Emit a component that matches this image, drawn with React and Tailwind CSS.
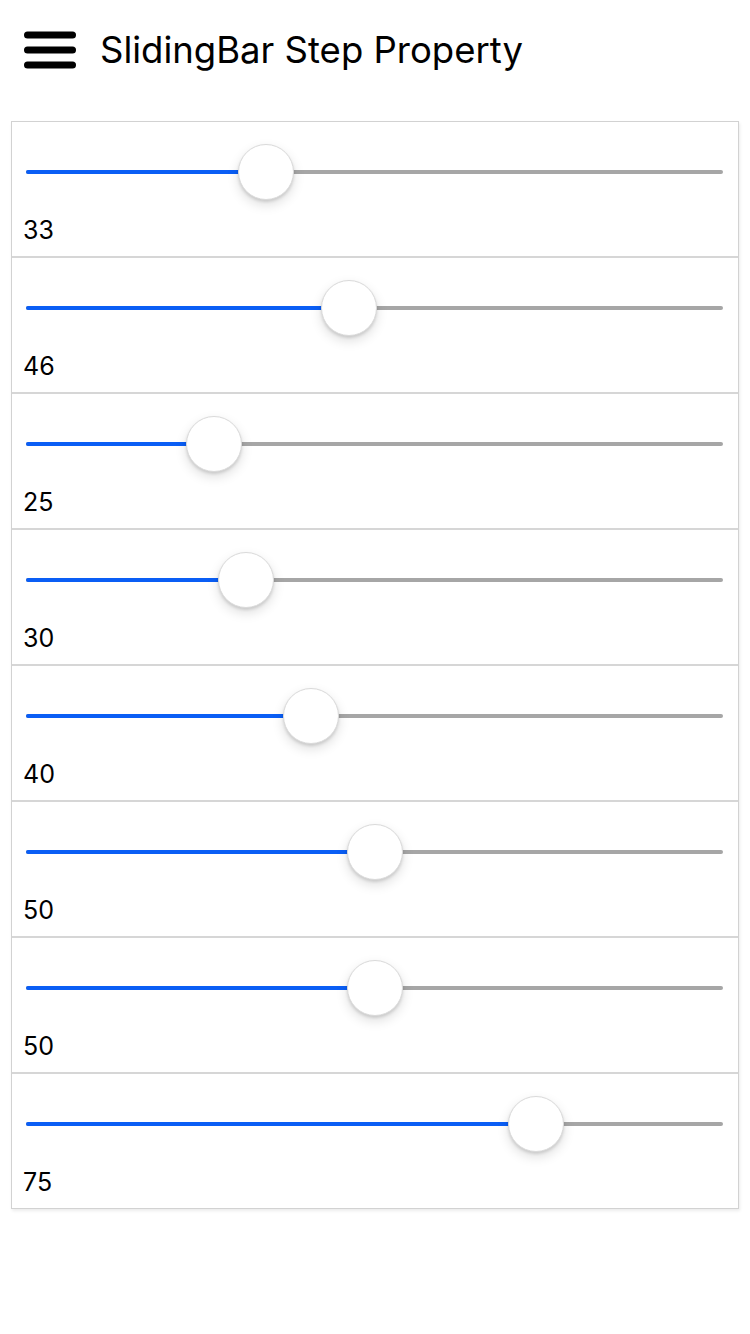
import React from "react";

const values = [33, 46, 25, 30, 40, 50, 50, 75];

function Slider({ value }) {
  const center = 27 + value * 6.44;
  return (
    <div className="relative ml-[14px] mr-[15px] h-[4px]">
      <div className="absolute inset-0 rounded-full bg-[#a6a6a6]" />
      <div
        className="absolute left-0 top-0 h-[4px] rounded-full bg-[#0a5ef5]"
        style={{ width: center }}
      />
      <div
        className="absolute top-[2px] h-[56px] w-[56px] -translate-x-1/2 -translate-y-1/2 rounded-full border border-[#dadada] bg-white shadow-[0_5px_12px_rgba(0,0,0,0.13),0_2px_3px_rgba(0,0,0,0.12)]"
        style={{ left: center }}
      />
    </div>
  );
}

export default function App() {
  return (
    <div className="min-h-[1334px] w-[750px] bg-white font-['Inter','Liberation_Sans',sans-serif] text-black">
      <div className="flex h-[100px] items-center px-[24px]">
        <svg width="52" height="44" viewBox="0 0 52 44" className="shrink-0">
          <g stroke="#000" strokeWidth="7" strokeLinecap="round">
            <line x1="3.5" y1="7" x2="48.5" y2="7" />
            <line x1="3.5" y1="22" x2="48.5" y2="22" />
            <line x1="3.5" y1="37" x2="48.5" y2="37" />
          </g>
        </svg>
        <div className="ml-[24px] text-[36.5px] leading-none">
          SlidingBar Step Property
        </div>
      </div>
      <div className="mx-[11px] mt-[21px] border border-[#d2d2d2] shadow-[1px_2px_3px_rgba(0,0,0,0.08)]">
        {values.map((v, i) => (
          <div
            key={i}
            className={
              "flex flex-col pt-[48px] " +
              (i < values.length - 1
                ? "h-[136px] border-b-2 border-[#d6d6d6]"
                : "h-[134px]")
            }
          >
            <Slider value={v} />
            <div className="mt-[43px] pl-[11px] text-[25px] leading-[26px]">
              {v}
            </div>
          </div>
        ))}
      </div>
    </div>
  );
}
